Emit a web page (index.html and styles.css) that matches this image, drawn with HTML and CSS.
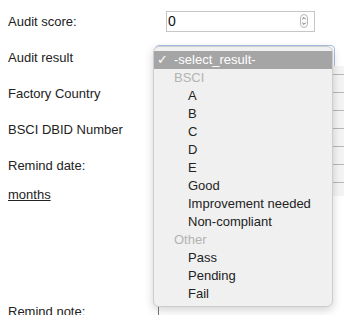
FILE: index.html
```html
<!DOCTYPE html>
<html lang="en">
<head>
  <meta charset="UTF-8">
  <meta name="viewport" content="width=device-width, initial-scale=1.0">
  <title>Audit</title>
  <link rel="stylesheet" href="styles.css">
</head>
<body>
  <form class="audit-form">
    <div class="row">
      <label class="label">Audit score:</label>
      <div class="number-input">
        <span>0</span>
        <svg class="spinner" width="8" height="14" viewBox="0 0 8 14">
          <rect x="0.5" y="0.5" width="7" height="13" rx="3.5" fill="#fafafa" stroke="#b9b9b9"/>
          <path d="M2.4 5.2 L4 3.6 L5.6 5.2" fill="none" stroke="#555" stroke-width="0.9"/>
          <path d="M2.4 8.8 L4 10.4 L5.6 8.8" fill="none" stroke="#555" stroke-width="0.9"/>
        </svg>
      </div>
    </div>

    <div class="row">
      <label class="label">Audit result</label>
      <div class="select-box"></div>
    </div>

    <div class="row">
      <label class="label">Factory Country</label>
    </div>

    <div class="row">
      <label class="label">BSCI DBID Number</label>
    </div>

    <div class="row">
      <label class="label">Remind date:</label>
    </div>

    <div class="row row-short">
      <a class="link">months</a>
    </div>

    <div class="row row-note">
      <label class="label">Remind note:</label>
      <div class="note-box"></div>
    </div>
  </form>

  <!-- the open select menu and the list it covers -->
  <div class="behind-lines"></div>
  <ul class="menu">
    <li class="option selected"><span class="check">✓</span>-select_result-</li>
    <li class="group">BSCI</li>
    <li class="option">A</li>
    <li class="option">B</li>
    <li class="option">C</li>
    <li class="option">D</li>
    <li class="option">E</li>
    <li class="option">Good</li>
    <li class="option">Improvement needed</li>
    <li class="option">Non-compliant</li>
    <li class="group">Other</li>
    <li class="option">Pass</li>
    <li class="option">Pending</li>
    <li class="option">Fail</li>
  </ul>
</body>
</html>
```

FILE: styles.css
```css
body {
  font-family: 'Liberation Sans', Arial, sans-serif;
  font-size: 13px;
  color: #222;
  background-color: #fff;
  margin: 0;
  padding: 3px 0 0 8px;
  overflow: hidden;
}

.audit-form {
  display: flex;
  flex-direction: column;
}

.row {
  display: flex;
  align-items: center;
  height: 36px;
}

.row-short {
  height: 22px;
}

.row-note {
  margin-top: 94px;
  height: 26px;
  align-items: flex-start;
  padding-top: 5px;
}

.label {
  width: 150px;
  flex-shrink: 0;
  line-height: 15px;
}

.link {
  color: #222;
  text-decoration: underline;
  line-height: 15px;
}

.number-input {
  margin-left: 8px;
  width: 149px;
  height: 21px;
  box-sizing: border-box;
  border: 1px solid #c6c6c6;
  display: flex;
  align-items: center;
  justify-content: space-between;
  padding: 0 6px 0 1px;
  color: #111;
  font-size: 14px;
}

.spinner {
  display: block;
}

.select-box {
  margin-left: -3px;
  width: 180px;
  height: 24px;
  box-sizing: border-box;
  border: 1px solid #a9c3e6;
  border-radius: 4px;
}

.note-box {
  width: 200px;
  height: 40px;
  margin-top: -5px;
  border-left: 1px solid #777;
}

.behind-lines {
  position: absolute;
  left: 158px;
  top: 66px;
  width: 186px;
  height: 130px;
  background-color: #f4f4f4;
  background-image: repeating-linear-gradient(to bottom, transparent 0, transparent 8px, #b8b8b8 8px, #b8b8b8 9px, transparent 9px, transparent 18px);
}

.menu {
  position: absolute;
  left: 153px;
  top: 46px;
  width: 180px;
  margin: 0;
  padding: 4px 0 3px;
  list-style: none;
  background-color: #f0f0f0;
  border: 1px solid #cdcdcd;
  border-radius: 6px;
  box-shadow: 0 3px 10px rgba(0, 0, 0, 0.18);
  box-sizing: border-box;
}

.menu li {
  height: 18px;
  line-height: 18px;
  white-space: nowrap;
  position: relative;
}

.group {
  padding-left: 20px;
  color: #b3b3b3;
}

.option {
  padding-left: 34px;
  color: #222;
}

.option.selected {
  padding-left: 20px;
  background-color: #a5a5a5;
  color: #fff;
}

.check {
  position: absolute;
  left: 3px;
  top: 0;
  font-family: 'DejaVu Sans', sans-serif;
  font-size: 13px;
  font-weight: bold;
}
```
